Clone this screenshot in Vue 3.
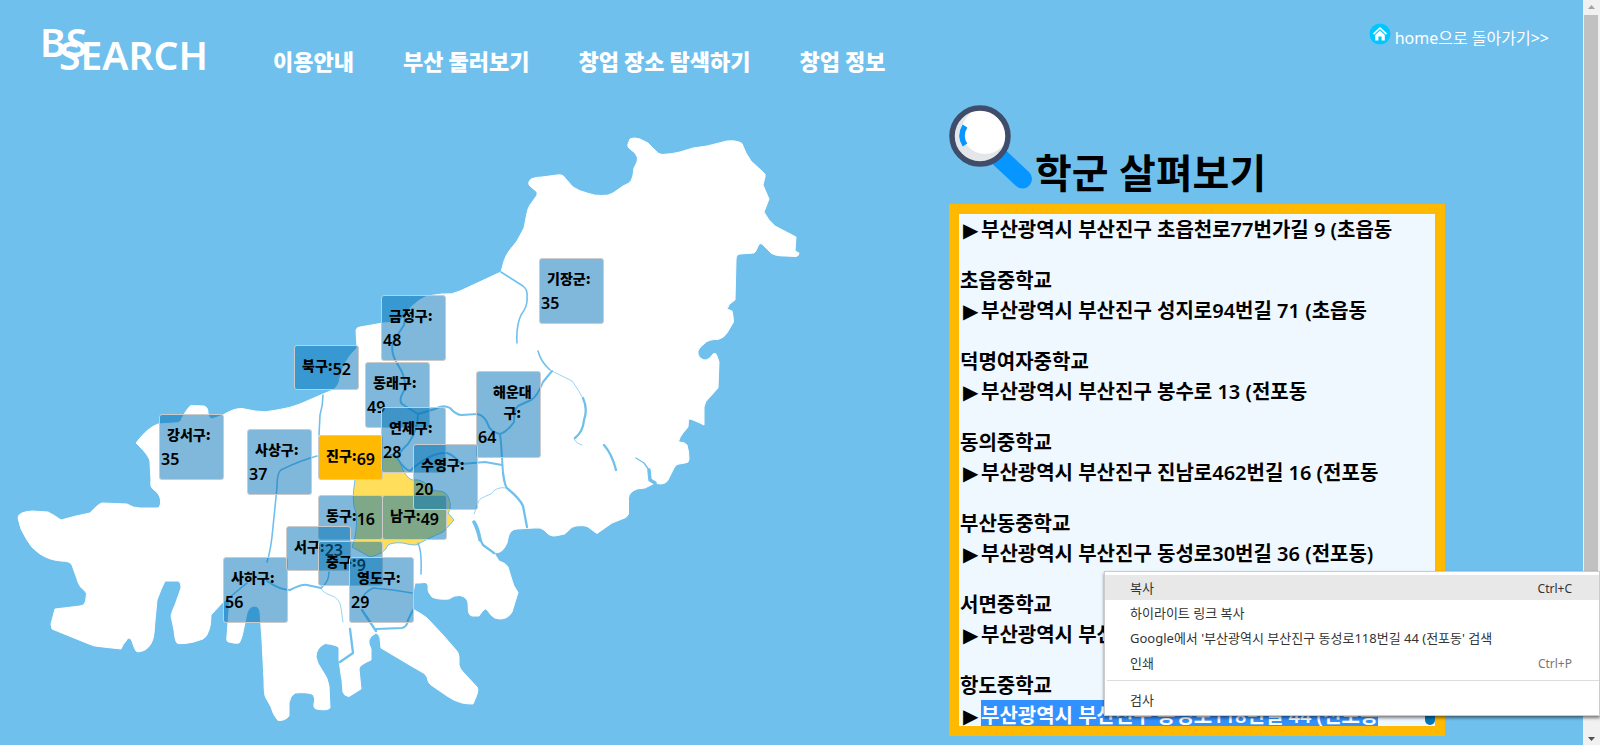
<script setup>
const menus = ['이용안내', '부산 둘러보기', '창업 장소 탐색하기', '창업 정보']

const districts = [
  { name: '강서구:', count: 35, x: 159, y: 314 },
  { name: '금정구:', count: 48, x: 381, y: 195 },
  { name: '기장군:', count: 35, x: 539, y: 158 },
  { name: '남구:', count: 49, x: 382, y: 395 },
  { name: '동구:', count: 16, x: 318, y: 395 },
  { name: '동래구:', count: 49, x: 365, y: 262 },
  { name: '진구:', count: 69, x: 318, y: 335, active: true },
  { name: '북구:', count: 52, x: 294, y: 245 },
  { name: '사상구:', count: 37, x: 247, y: 329 },
  { name: '사하구:', count: 56, x: 223, y: 457 },
  { name: '서구:', count: 23, x: 286, y: 426 },
  { name: '해운대\n구:', count: 64, x: 476, y: 271, wrapped: true },
  { name: '연제구:', count: 28, x: 381, y: 307 },
  { name: '수영구:', count: 20, x: 413, y: 344 },
  { name: '중구:', count: 9, x: 318, y: 441 },
  { name: '영도구:', count: 29, x: 349, y: 457 }
]

const schools = [
  { name: '', address: '부산광역시 부산진구 초읍천로77번가길 9 (초읍동' },
  { name: '초읍중학교', address: '부산광역시 부산진구 성지로94번길 71 (초읍동' },
  { name: '덕명여자중학교', address: '부산광역시 부산진구 봉수로 13 (전포동' },
  { name: '동의중학교', address: '부산광역시 부산진구 진남로462번길 16 (전포동' },
  { name: '부산동중학교', address: '부산광역시 부산진구 동성로30번길 36 (전포동)' },
  { name: '서면중학교', address: '부산광역시 부산진구' },
  { name: '항도중학교', address: '부산광역시 부산진구 동성로118번길 44 (전포동', selected: true }
]

const actions = [
  { label: '복사', key: 'Ctrl+C', hover: true },
  { label: '하이라이트 링크 복사' },
  { label: "Google에서 '부산광역시 부산진구 동성로118번길 44 (전포동' 검색" },
  { label: '인쇄', key: 'Ctrl+P' }
]
</script>

<template>
  <div class="window">
    <div class="page">
      <header class="top">
        <a class="logo" href="#" aria-label="BS SEARCH"><span>BS</span><span class="logo-word">SEARCH</span></a>
        <nav class="nav">
          <a v-for="m in menus" :key="m" href="#">{{ m }}</a>
        </nav>
        <a class="home" href="#">
          <svg width="22" height="22" viewBox="0 0 22 22" aria-hidden="true">
            <circle cx="11" cy="11" r="10.5" fill="#00c8ff" />
            <path d="M4.5 11.2 11 5l6.5 6.2" fill="none" stroke="#fff" stroke-width="1.6" />
            <path d="M6.2 12 11 7.5l4.8 4.5v5.5h-3.2v-4H9.4v4H6.2z" fill="#fff" />
          </svg>
          <span>home으로 돌아가기&gt;&gt;</span>
        </a>
      </header>

      <main class="content">
        <section class="map" aria-label="부산 지도">
          <svg class="land" width="830" height="645" viewBox="0 100 830 645" aria-hidden="true">
            <path
              fill="#fff" stroke="#fff" stroke-width="1" stroke-linejoin="round"
              d="M501 272L504 261Q506 255 509 251L517 241 524 228 527 213Q528 208 530 205L535 198Q538 195 537 192L530 186Q527 183 531 179Q536 177 542 177L557 175Q563 174 565 178L573 187Q579 191 587 193Q595 196 602 195.500Q608 196 613 193L623 186 629 183Q632 181 633 175L634 168 637 162Q639 158 635 153L630 149Q627 147 628 144L630 139Q632 138 635 138L640 139 648 143 655 150Q658 154 662 154.500Q672 154 680 152L693 148 707 146 727 141Q734 140 739 142Q743 143 743 146L746 153 751 161 763 172Q766 174 765 177L763 185 769 199 764 212Q768 220 775 226L796 237 795 251 799 253Q799 256 796 256.500L785 256Q775 256 771 253L765 247Q762 243 760 243.500L758 246Q756 252 754 253L740 254Q736 254 736 260L735 300Q728 304 727 309L732 311Q733 314 733.500 322L727 333Q724 338 718 339.500Q708 339 704 344Q697 349 698 354Q700 360 706 360Q710 359 713 354Q716 352 717 356L719 362 718 388 709 398Q705 401 704 407L704 425 700 423 693 420Q689 418 688.500 420L688 427 683 433Q678 440 679 442Q685 442 687 445Q689 452 689 459Q689 463 685 463L679 464Q676 464 674 468L669 478Q667 484 660 484L655 483 645 488 637 489Q629 492 628.500 498L628.500 514Q627 518 622 519L612 523 597 533.500 588 527Q585 525 576 526Q572 526 568 531Q565 535 560 535Q556 536 553 536Q549 536 544 530Q541 527 534 528L517 529Q511 529 508.500 536L507 543Q503 552 498 552.500L494 553 499 561Q506 563 508 567L511 577Q513 586 518 592.500L512 612Q508 619 500 619Q494 619 491 615Q486 608 485 609Q482 611 479 616L472 616Q469 615 468.500 612L468 603Q467 597 460 595.500Q454 595 449 599Q438 600 432 597Q428 592 428 590Q429 583 425 582.500L419 583 415 583 413 593 413 609 416 611Q422 614 427 618L443 635 456 650Q459 653 459 657L459 665Q460 669 463 672L477 687Q479 690 476 697L473 704Q467 704 462 703Q454 701 447 696L431 685Q428 683 427 677Q425 673 420 671L413 667 381 648 380 638Q379 634 376 633Q370 636 369 640Q368 643 371 649L371 660Q359 665 359 669L361 689 349 696.500Q344 696 343 692L342 680Q341 676 340 667L339 660 339 648Q338 645 325 643.500Q316 648 316 657Q317 663 322 670Q328 678 329 686L330 708Q327 711 316 709Q313 708 314 704Q316 697 312 694Q306 692 295 693Q290 696 289 703L289 716Q285 721 278 720.500Q273 715 271 707L266 698Q264 696 264 680L262 640 260 612Q259 606 254 606Q249 607 247 613L243 632Q241 641 239 643Q236 644 229 642Q226 642 227 636L230 597 223 602 211 615Q211 625 209 630Q207 637 203 639Q192 643 185 643.500Q178 644 177 643Q175 641 174 630L171 616Q172 611 175 605L181 588Q181 582 178 581L165 581Q161 589 157 600Q155 620 154 633Q153 645 145 650Q138 653 136 651Q134 648 132 641Q129 635 126 641Q123 644 121 649L103 647Q94 647 84 642L52 629 51 624 55 609 80 606Q86 605 86 598Q88 593 84 590Q79 587 77 579L72 565Q70 561 61 561Q49 560 40 554Q31 548 27 540Q20 530 18 518Q18 512 32 511L48 512Q54 515 61 520L76 516 90 513Q98 504 102 503L127 504Q133 508 140 508L157 508Q161 508 160.500 500Q160 494 153 489Q150 487 151 480L150 462Q150 458 143 450L136 443Q147 428 158 424L175 423Q181 423 182 418Q188 407 191 405.500L204 406Q208 407 208 413Q208 418 212 419L223 415Q234 408 242 408.500L255 411Q265 413 277 410Q290 408 300 404L323 394 333 390Q339 386 340 378Q343 361 357 348L356 330Q357 327 360 327L383 323 400 322Q411 303 427 296L442 294Q452 295 460 291L501 272Z"
            />
            <path
              fill="#ffde5b" stroke="#70c0ee" stroke-width="1"
              d="M384 458Q394 451 398 458L404 472Q409 480 413 480Q421 479 426 484Q431 491 438 491Q447 491 449 499Q452 508 448 513L454 520Q449 526 443 532Q427 539 420 543Q418 547 403 543Q393 542 388 545Q385 554 370 557L352 547Q358 532 356 513Q351 502 355 480L358 470Z"
            />
            <g fill="none" stroke="#70c0ee" stroke-linecap="round" stroke-linejoin="round">
              <path stroke-width="1.600" d="M501 272L523 286Q528 290 527 297 528 306 521 315 516 326 517 343M538 351Q541 362 550 370M323 395Q323 405 320 415L319 435M267 562Q271 550 273 527L277 487Q277 470 283 469 299 461 317 456M230 597L247 583M418 543Q422 551 421 574M373 588L393 590 412 593M373 588Q363 593 362 600M321 588Q329 582 329 572" />
              <path stroke-width="2" d="M552 371L543 382Q537 397 531 400L518 406Q514 409 514 422 507 432 500 434 492 432 489 427 485 415 477 414L462 415Q456 415 450 408 443 404 435 409L418 414 402 404Q398 400 405 389 406 377 398 365 390 353 393 342L404 325 405 318M418 414Q418 430 408 444 401 450 397 458 405 470 410 471 430 452 447 453 455 456 461 464L485 462 502 465M500 434L501 443 503 473M267 581Q280 590 290 590 302 584 307 585L321 588M376 629L402 628Q407 627 408 620L413 610" />
              <path stroke-width="0.700" d="M552 371L572 381Q580 392 582 397M574 439Q577 444 582 445M321 588Q323 593 330 595 340 598 341 608L343 622M507 488Q496 486 491 494 477 499 478 503L474 514" />
              <path stroke-width="2.300" d="M583 398Q588 409 584 420 583 432 575 438M604 445Q612 454 616 470M503 473Q505 488 508 489 520 499 523 506L527 527M474 522Q480 540 483 545L494 553M350 629L353 653 340 662M362 610L376 631" />
              <path stroke-width="3.500" d="M474 522Q478 528 480 540M649 470L650 480 655 483" />
              <path stroke-width="1.400" d="M636 458L644 463 649 470" />
            </g>
          </svg>
          <button
            v-for="d in districts" :key="d.name" type="button"
            class="tile" :class="{ active: d.active, wrapped: d.wrapped }"
            :style="{ left: d.x + 'px', top: d.y + 'px' }"
          ><span class="tile-name">{{ d.name }}</span><span class="tile-count">{{ d.count }}</span></button>
        </section>

        <section class="side">
          <div class="heading">
            <svg width="86" height="86" viewBox="0 0 86 86" aria-hidden="true">
              <path d="M50 54L73.500 76" stroke="#0795ff" stroke-width="19" stroke-linecap="round" />
              <circle cx="31" cy="33" r="28" fill="#e4e6e9" />
              <circle cx="36" cy="28" r="23" fill="#fff" />
              <circle cx="31" cy="33" r="28" fill="none" stroke="#3f4d6b" stroke-width="5.500" />
              <path d="M16 23Q10 33 16 42" fill="none" stroke="#0795ff" stroke-width="5.500" />
            </svg>
            <h1>학군 살펴보기</h1>
          </div>
          <div class="panel">
            <article v-for="s in schools" :key="s.address" class="school">
              <h2 v-if="s.name">{{ s.name }}</h2>
              <p><span class="arrow">▶</span><span :class="{ selected: s.selected }">{{ s.address }}</span></p>
            </article>
            <div class="panel-thumb"></div>
          </div>
        </section>
      </main>
    </div>

    <div class="scrollbar" aria-hidden="true">
      <svg width="17" height="15" viewBox="0 0 17 15"><path d="M5 9l3.500-4L12 9z" fill="#a3a3a3" /></svg>
      <div class="thumb"></div>
      <svg width="17" height="15" viewBox="0 0 17 15"><path d="M5 7l3.500 4L12 7z" fill="#505050" /></svg>
    </div>

    <div class="context" role="menu">
      <button
        v-for="a in actions" :key="a.label" type="button" role="menuitem"
        class="action" :class="{ hover: a.hover }"
      ><span>{{ a.label }}</span><span class="key">{{ a.key }}</span></button>
      <hr />
      <button type="button" role="menuitem" class="action"><span>검사</span></button>
    </div>
  </div>
</template>

<style>
body {
  margin: 0;
}
</style>

<style scoped>
.window {
  position: relative;
  display: flex;
  height: 100vh;
  overflow: hidden;
  background: #70c0ee;
  font-family: "Noto Sans", "Noto Sans CJK KR", sans-serif;
  color: #000;
}
.page {
  flex: 1;
  min-width: 0;
}
a {
  color: #fff;
  text-decoration: none;
}
button {
  font-family: inherit;
  margin: 0;
}
.top {
  display: flex;
  align-items: flex-start;
  height: 100px;
  padding: 0 34px 0 38px;
}
.logo {
  position: relative;
  width: 233px;
  padding-top: 16px;
  padding-left: 2px;
  font-size: 39px;
  line-height: 52px;
  font-weight: 600;
}
.logo-word {
  position: absolute;
  left: 21px;
  top: 29px;
}
.nav {
  display: flex;
  gap: 49px;
  padding-top: 44px;
  font-family: "Noto Sans CJK KR", sans-serif;
  font-size: 22px;
  line-height: 32px;
  font-weight: 900;
  white-space: nowrap;
}
.home {
  display: flex;
  gap: 4px;
  margin-left: auto;
  padding-top: 23px;
  font-size: 16px;
  line-height: 30px;
  white-space: nowrap;
}
.content {
  display: grid;
  grid-template-columns: minmax(0, 949px) 496px;
}
.map {
  position: relative;
}
.land {
  display: block;
}
.tile {
  position: absolute;
  display: flex;
  flex-wrap: wrap;
  align-items: flex-end;
  width: 65px;
  box-sizing: border-box;
  padding: 0 0 9px 1px;
  border: 1px solid #ccc;
  border-radius: 3px;
  background: rgba(0, 114, 181, 0.5);
  color: #000;
  text-align: center;
}
.tile.active {
  background: #ffb900;
}
.tile-name {
  padding: 9px 0 4px 6px;
  font-family: "Noto Sans CJK KR", sans-serif;
  font-size: 14px;
  line-height: 21px;
  font-weight: 900;
  white-space: pre;
}
.wrapped .tile-name {
  padding-left: 15px;
}
.tile-count {
  font-size: 16px;
  line-height: 21px;
  font-weight: 600;
}
.side {
  padding-top: 3px;
}
.heading {
  display: flex;
  height: 101px;
}
h1 {
  margin: 0;
  padding-top: 42px;
  font-size: 40px;
  line-height: 56px;
  font-weight: 600;
  white-space: nowrap;
}
.panel {
  position: relative;
  height: 512px;
  overflow: hidden;
  border: 10px solid #ffb900;
  background: #f0f8ff;
}
.school {
  padding-bottom: 20px;
  font-size: 20px;
  line-height: 32px;
  white-space: nowrap;
}
.school h2 {
  margin: 0;
  padding-left: 1px;
  font-size: 20px;
  line-height: 29px;
  font-weight: 600;
}
.school p {
  display: flex;
  margin: 0;
  font-weight: 600;
}
.arrow {
  width: 18px;
  padding-left: 4px;
  font-family: "DejaVu Sans", sans-serif;
}
.selected {
  background: #3390ff;
  color: #fff;
}
.panel-thumb {
  position: absolute;
  right: 0;
  bottom: 1px;
  width: 10px;
  height: 100px;
  border-radius: 5px;
  background: #0075b8;
}
.scrollbar {
  display: flex;
  flex-direction: column;
  width: 17px;
  background: #f1f1f1;
}
.thumb {
  flex: 0 1 640px;
  margin: 0 2px 0 1px;
  background: #c1c1c1;
}
.scrollbar svg:last-child {
  margin-top: auto;
}
.context {
  position: absolute;
  right: 0;
  top: 571px;
  width: 496px;
  box-sizing: border-box;
  padding: 3px 0;
  border: 1px solid #ccc;
  background: #fff;
  box-shadow: 0 2px 3px rgba(0, 0, 0, 0.5);
}
.action {
  display: flex;
  justify-content: space-between;
  width: 100%;
  padding: 2px 27px 0 25px;
  border: 0;
  background: none;
  font-size: 13px;
  line-height: 23px;
  color: #333;
  text-align: left;
  white-space: nowrap;
}
.action.hover {
  background: #e8e8e8;
}
.action .key {
  font-size: 12px;
  color: #777;
}
.action.hover .key {
  color: #333;
}
hr {
  margin: 5px 0 6px 2px;
  border: 0;
  border-top: 1px solid #ddd;
}
</style>
